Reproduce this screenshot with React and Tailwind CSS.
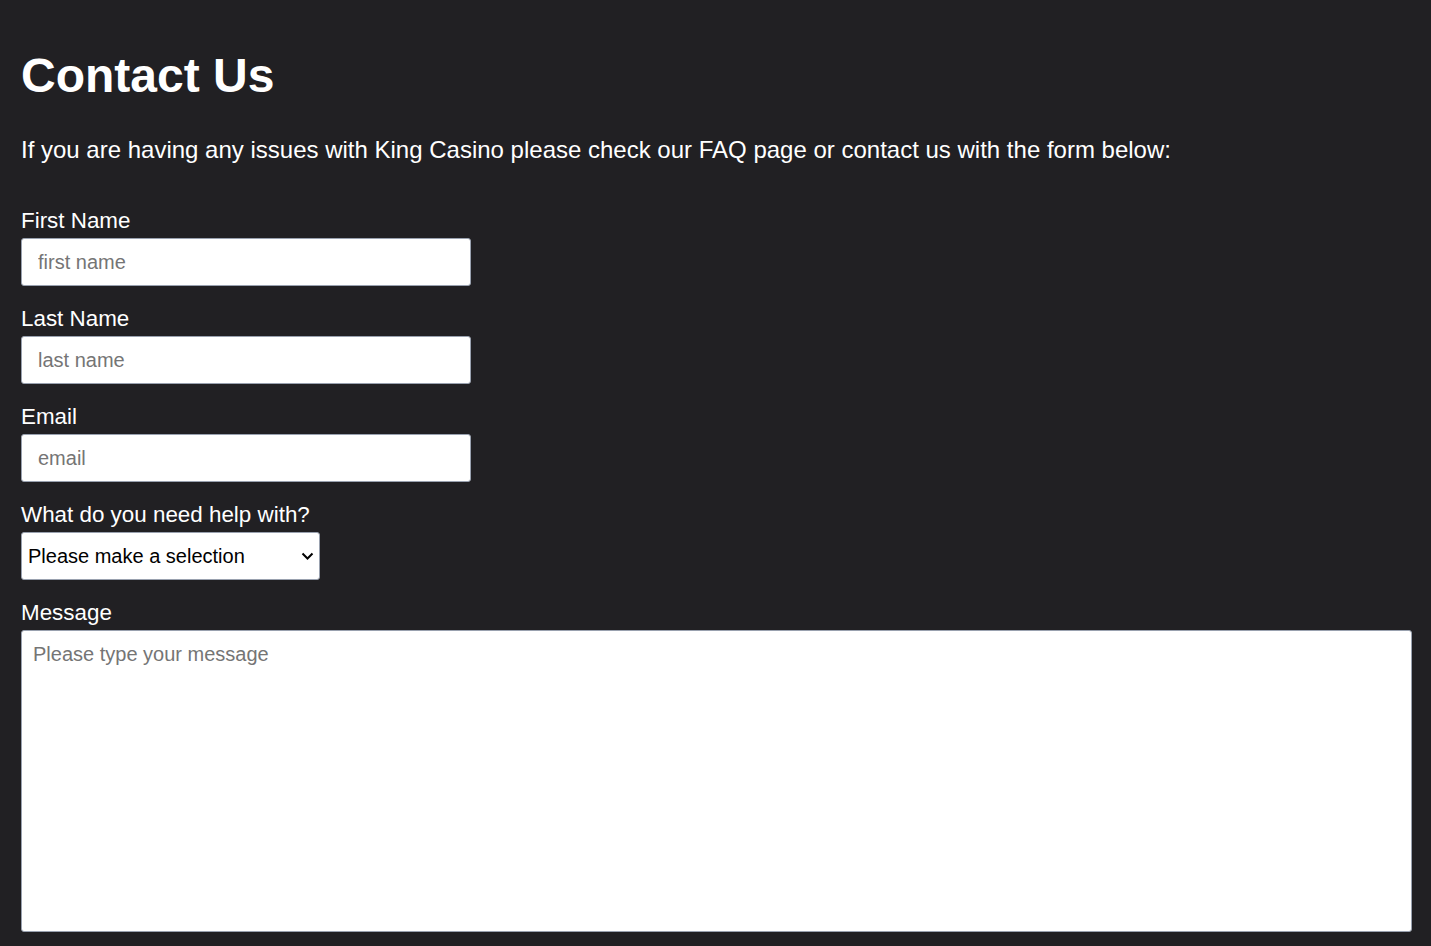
import { useState } from "react";

const inputClass =
  "block w-[450px] h-12 bg-white border border-gray-400 rounded-[3px] px-[16px] text-[20px] text-black placeholder:text-[#757575] outline-none";

const App = () => {
  const [form, setForm] = useState({
    first: "",
    last: "",
    email: "",
    topic: "",
    message: "",
  });

  const onChange = (e) => setForm({ ...form, [e.target.name]: e.target.value });

  return (
    <div className="min-h-screen bg-[#212023] text-white pl-[21px] pr-[19px] pt-[47px] pb-4 font-['Liberation_Sans',Arial,sans-serif]">
      <h1 className="text-[48px] font-bold leading-[58px]">Contact Us</h1>
      <p className="mt-[29px] text-[24px] leading-[32px]">
        If you are having any issues with King Casino please check our FAQ page or contact us with the form below:
      </p>

      <form className="mt-[42px] flex flex-col">
        <label className="text-[22.4px] leading-[26px] mb-[4px]">First Name</label>
        <input name="first" value={form.first} onChange={onChange} placeholder="first name" className={inputClass} />

        <label className="text-[22.4px] leading-[26px] mb-[4px] mt-[20px]">Last Name</label>
        <input name="last" value={form.last} onChange={onChange} placeholder="last name" className={inputClass} />

        <label className="text-[22.4px] leading-[26px] mb-[4px] mt-[20px]">Email</label>
        <input name="email" value={form.email} onChange={onChange} placeholder="email" className={inputClass} />

        <label className="text-[22.4px] leading-[26px] mb-[4px] mt-[20px]">What do you need help with?</label>
        <div className="relative w-[299px]">
          <select
            name="topic"
            value={form.topic}
            onChange={onChange}
            className="block w-full h-12 appearance-none bg-white border border-gray-400 rounded-[3px] pl-[6px] pr-8 text-[20px] text-black outline-none"
          >
            <option value="">Please make a selection</option>
            <option value="account">Account</option>
            <option value="payments">Payments</option>
            <option value="games">Games</option>
            <option value="other">Other</option>
          </select>
          {/* chevron drawn over the select */}
          <svg
            className="pointer-events-none absolute right-[6px] top-[20px]"
            width="13"
            height="8"
            viewBox="0 0 13 8"
            fill="none"
          >
            <path d="M1.5 1.5 L6.5 6.5 L11.5 1.5" stroke="#000" strokeWidth="2" />
          </svg>
        </div>

        <label className="text-[22.4px] leading-[26px] mb-[4px] mt-[20px]">Message</label>
        <textarea
          name="message"
          value={form.message}
          onChange={onChange}
          placeholder="Please type your message"
          className="block w-full h-[302px] bg-white border border-gray-400 rounded-[3px] px-[11px] py-[8px] text-[20px] text-black placeholder:text-[#757575] outline-none resize-none"
        />
      </form>
    </div>
  );
};

export default App;
